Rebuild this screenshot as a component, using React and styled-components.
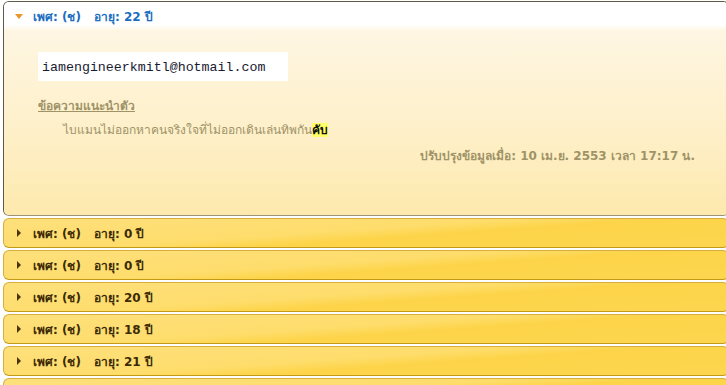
import React from 'react'
import styled, { createGlobalStyle } from 'styled-components'

const GlobalStyle = createGlobalStyle`
  html, body {
    margin: 0;
    padding: 0;
    background: #ffffff;
    overflow: hidden;
  }
  body {
    font-family: Tahoma, 'DejaVu Sans', 'Noto Sans', sans-serif;
  }
`

const Accordion = styled.div`
  width: 726px;
  padding: 1px 0 0 3px;
  display: flex;
  flex-direction: column;
  gap: 2px;
`

const ActiveSection = styled.div`
  border: 1px solid #5f5b4c;
  border-bottom-color: #9c9278;
  border-radius: 6px;
  overflow: hidden;
`

const ActiveHeader = styled.div`
  height: 28px;
  display: flex;
  align-items: center;
  padding-left: 11px;
  background: linear-gradient(#ffffff 0%, #ffffff 80%, #fff8e8 100%);
  color: #1a6dbf;
  font-size: 12px;
  font-weight: bold;
`

const Header = styled.div`
  height: 28px;
  display: flex;
  align-items: center;
  padding-left: 11px;
  border: 1px solid #d5ae3c;
  border-bottom-color: #c29a16;
  border-radius: 6px;
  background: linear-gradient(
    176deg,
    #fee07c 0%,
    #fedd6c 45%,
    #fdd449 58%,
    #fdd650 100%
  );
  color: #3c2a04;
  font-size: 12px;
  font-weight: bold;
`

const Arrow = styled.span`
  width: 0;
  height: 0;
  border-style: solid;
  ${(p) =>
    p.$open
      ? `border-width: 5px 4px 0 4px;
         border-color: #e8952c transparent transparent transparent;
         margin-right: 10px;`
      : `border-width: 4px 0 4px 4px;
         border-color: transparent transparent transparent #4a3400;
         margin-left: 2px;
         margin-right: 12px;`}
`

const Sex = styled.span`
  margin-right: 13px;
`

const Content = styled.div`
  height: 185px;
  box-sizing: border-box;
  padding: 22px 33px 0 34px;
  background: linear-gradient(#fef6e3 0%, #feefc6 60%, #fde9ad 100%);
  color: #9f9368;
  font-size: 12px;
`

const EmailBox = styled.div`
  width: 250px;
  height: 29px;
  box-sizing: border-box;
  padding: 2px 0 0 4px;
  display: flex;
  align-items: center;
  background: #ffffff;
  color: #1a1a33;
  font-family: 'Liberation Mono', 'DejaVu Sans Mono', monospace;
  font-size: 13.3px;
`

const IntroTitle = styled.div`
  margin-top: 17px;
  font-weight: bold;
  text-decoration: underline;
  line-height: 16px;
`

const IntroText = styled.div`
  margin-top: 8px;
  padding-left: 25px;
  line-height: 16px;
`

const Mark = styled.b`
  background: #ffff66;
  color: #111111;
`

const Updated = styled.div`
  margin-top: 10px;
  text-align: right;
  font-weight: bold;
  line-height: 16px;
`

const people = ['0', '0', '20', '18', '21']

const App = () => {
  return (
    <>
      <GlobalStyle />
      <Accordion>
        <ActiveSection>
          <ActiveHeader>
            <Arrow $open />
            <Sex>เพศ: (ช)</Sex>
            <span>อายุ: 22 ปี</span>
          </ActiveHeader>
          <Content>
            <EmailBox>iamengineerkmitl@hotmail.com</EmailBox>
            <IntroTitle>ข้อความแนะนำตัว</IntroTitle>
            <IntroText>
              ไบแมนไม่ออกหาคนจริงใจที่ไม่ออกเดินเล่นทิพกัน<Mark>คับ</Mark>
            </IntroText>
            <Updated>ปรับปรุงข้อมูลเมื่อ: 10 เม.ย. 2553 เวลา 17:17 น.</Updated>
          </Content>
        </ActiveSection>
        {people.map((age, i) => (
          <Header key={i}>
            <Arrow />
            <Sex>เพศ: (ช)</Sex>
            <span>อายุ: {age} ปี</span>
          </Header>
        ))}
        <Header />
      </Accordion>
    </>
  )
}

export default App
